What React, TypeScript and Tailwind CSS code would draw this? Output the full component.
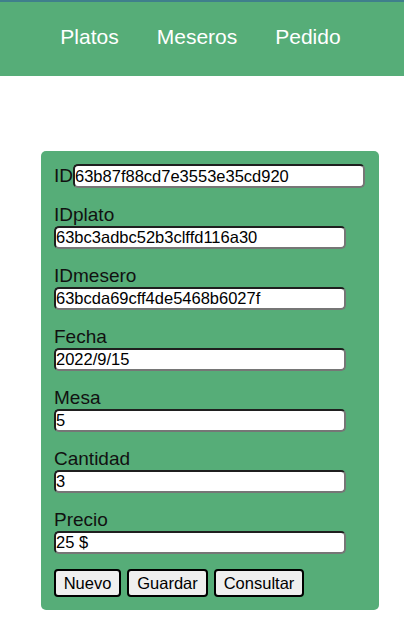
const fields = [
  { label: "IDplato", value: "63bc3adbc52b3clffd116a30" },
  { label: "IDmesero", value: "63bcda69cff4de5468b6027f" },
  { label: "Fecha", value: "2022/9/15" },
  { label: "Mesa", value: "5" },
  { label: "Cantidad", value: "3" },
  { label: "Precio", value: "25 $" },
];

const inputCls =
  "block h-[23px] w-[292px] rounded-[5px] border-2 border-t-[#1f1f1f] border-l-[#1f1f1f] border-r-[#767676] border-b-[#767676] bg-white px-0 text-[16.5px] leading-[19px] text-black outline-none";

export default function App() {
  return (
    <div className="min-h-[630px] bg-white font-['Liberation_Sans',Arial,sans-serif]">
      <header className="flex h-[76px] items-center justify-center gap-[38px] border-t-2 border-[#3f7f8c] bg-[#56ad78] pb-[4px] pr-[3px]">
        <a className="text-[21px] text-white">Platos</a>
        <a className="text-[21px] text-white">Meseros</a>
        <a className="text-[21px] text-white">Pedido</a>
      </header>

      <form className="mx-[41px] mt-[75px] w-[338px] rounded-[5px] bg-[#56ad78] px-[13px] pb-[13px] pt-[13px] text-[#111]">
        <div className="flex h-[24px] items-center">
          <label className="text-[19px] leading-[24px]">ID</label>
          <input className={inputCls + " h-[24px]"} defaultValue="63b87f88cd7e3553e35cd920" />
        </div>

        {fields.map((f) => (
          <div key={f.label} className="mt-[15px]">
            <label className="block text-[19px] leading-[23px]">{f.label}</label>
            <input className={inputCls} defaultValue={f.value} />
          </div>
        ))}

        <div className="mt-[15px] flex gap-[6px]">
          <button type="button" className="h-[28px] w-[67px] rounded-[4px] border-2 border-black bg-[#efefef] text-[16.5px] text-black">
            Nuevo
          </button>
          <button type="button" className="h-[28px] w-[81px] rounded-[4px] border-2 border-black bg-[#efefef] text-[16.5px] text-black">
            Guardar
          </button>
          <button type="button" className="h-[28px] w-[90px] rounded-[4px] border-2 border-black bg-[#efefef] text-[16.5px] text-black">
            Consultar
          </button>
        </div>
      </form>
    </div>
  );
}
